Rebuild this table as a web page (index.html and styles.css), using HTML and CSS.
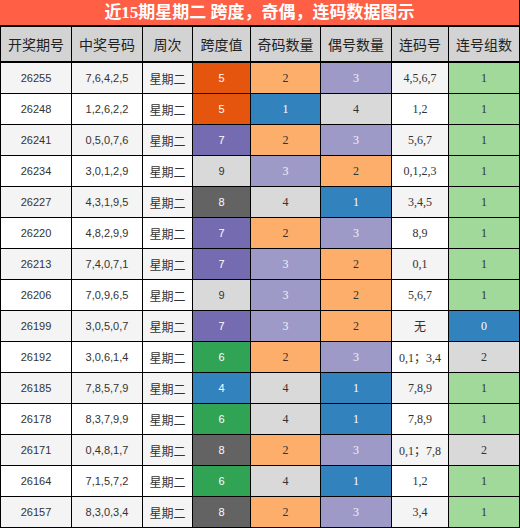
FILE: index.html
```html
<!DOCTYPE html>
<html lang="zh-CN">
<head>
  <meta charset="UTF-8" />
  <title>近15期星期二 跨度，奇偶，连码数据图示</title>
  <link rel="stylesheet" href="styles.css">
</head>
<body>
  <div class="page">
    <div class="title">近15期星期二 跨度，奇偶，连码数据图示</div>

    <div class="grid">
      <!-- 表头 -->
      <div class="head">开奖期号</div>
      <div class="head">中奖号码</div>
      <div class="head">周次</div>
      <div class="head">跨度值</div>
      <div class="head">奇码数量</div>
      <div class="head">偶号数量</div>
      <div class="head">连码号</div>
      <div class="head">连号组数</div>

      <div class="row odd">
        <div class="plain sans">26255</div><div class="plain sans">7,6,4,2,5</div><div class="plain cn">星期二</div>
        <div class="sans k-orange">5</div><div class="serif k-peach">2</div><div class="serif k-lilac">3</div>
        <div class="plain serif">4,5,6,7</div><div class="serif k-mint">1</div>
      </div>
      <div class="row">
        <div class="plain sans">26248</div><div class="plain sans">1,2,6,2,2</div><div class="plain cn">星期二</div>
        <div class="sans k-orange">5</div><div class="serif k-blue">1</div><div class="serif k-grey">4</div>
        <div class="plain serif">1,2</div><div class="serif k-mint">1</div>
      </div>
      <div class="row odd">
        <div class="plain sans">26241</div><div class="plain sans">0,5,0,7,6</div><div class="plain cn">星期二</div>
        <div class="sans k-purple">7</div><div class="serif k-peach">2</div><div class="serif k-lilac">3</div>
        <div class="plain serif">5,6,7</div><div class="serif k-mint">1</div>
      </div>
      <div class="row">
        <div class="plain sans">26234</div><div class="plain sans">3,0,1,2,9</div><div class="plain cn">星期二</div>
        <div class="sans k-grey">9</div><div class="serif k-lilac">3</div><div class="serif k-peach">2</div>
        <div class="plain serif">0,1,2,3</div><div class="serif k-mint">1</div>
      </div>
      <div class="row odd">
        <div class="plain sans">26227</div><div class="plain sans">4,3,1,9,5</div><div class="plain cn">星期二</div>
        <div class="sans k-dark">8</div><div class="serif k-grey">4</div><div class="serif k-blue">1</div>
        <div class="plain serif">3,4,5</div><div class="serif k-mint">1</div>
      </div>
      <div class="row">
        <div class="plain sans">26220</div><div class="plain sans">4,8,2,9,9</div><div class="plain cn">星期二</div>
        <div class="sans k-purple">7</div><div class="serif k-peach">2</div><div class="serif k-lilac">3</div>
        <div class="plain serif">8,9</div><div class="serif k-mint">1</div>
      </div>
      <div class="row odd">
        <div class="plain sans">26213</div><div class="plain sans">7,4,0,7,1</div><div class="plain cn">星期二</div>
        <div class="sans k-purple">7</div><div class="serif k-lilac">3</div><div class="serif k-peach">2</div>
        <div class="plain serif">0,1</div><div class="serif k-mint">1</div>
      </div>
      <div class="row">
        <div class="plain sans">26206</div><div class="plain sans">7,0,9,6,5</div><div class="plain cn">星期二</div>
        <div class="sans k-grey">9</div><div class="serif k-lilac">3</div><div class="serif k-peach">2</div>
        <div class="plain serif">5,6,7</div><div class="serif k-mint">1</div>
      </div>
      <div class="row odd">
        <div class="plain sans">26199</div><div class="plain sans">3,0,5,0,7</div><div class="plain cn">星期二</div>
        <div class="sans k-purple">7</div><div class="serif k-lilac">3</div><div class="serif k-peach">2</div>
        <div class="plain serif">无</div><div class="serif k-blue">0</div>
      </div>
      <div class="row">
        <div class="plain sans">26192</div><div class="plain sans">3,0,6,1,4</div><div class="plain cn">星期二</div>
        <div class="sans k-green">6</div><div class="serif k-peach">2</div><div class="serif k-lilac">3</div>
        <div class="plain serif">0,1；3,4</div><div class="serif k-grey">2</div>
      </div>
      <div class="row odd">
        <div class="plain sans">26185</div><div class="plain sans">7,8,5,7,9</div><div class="plain cn">星期二</div>
        <div class="sans k-blue">4</div><div class="serif k-grey">4</div><div class="serif k-blue">1</div>
        <div class="plain serif">7,8,9</div><div class="serif k-mint">1</div>
      </div>
      <div class="row">
        <div class="plain sans">26178</div><div class="plain sans">8,3,7,9,9</div><div class="plain cn">星期二</div>
        <div class="sans k-green">6</div><div class="serif k-grey">4</div><div class="serif k-blue">1</div>
        <div class="plain serif">7,8,9</div><div class="serif k-mint">1</div>
      </div>
      <div class="row odd">
        <div class="plain sans">26171</div><div class="plain sans">0,4,8,1,7</div><div class="plain cn">星期二</div>
        <div class="sans k-dark">8</div><div class="serif k-peach">2</div><div class="serif k-lilac">3</div>
        <div class="plain serif">0,1；7,8</div><div class="serif k-grey">2</div>
      </div>
      <div class="row">
        <div class="plain sans">26164</div><div class="plain sans">7,1,5,7,2</div><div class="plain cn">星期二</div>
        <div class="sans k-green">6</div><div class="serif k-grey">4</div><div class="serif k-blue">1</div>
        <div class="plain serif">1,2</div><div class="serif k-mint">1</div>
      </div>
      <div class="row odd">
        <div class="plain sans">26157</div><div class="plain sans">8,3,0,3,4</div><div class="plain cn">星期二</div>
        <div class="sans k-dark">8</div><div class="serif k-peach">2</div><div class="serif k-lilac">3</div>
        <div class="plain serif">3,4</div><div class="serif k-mint">1</div>
      </div>
    </div>
  </div>
</body>
</html>
```

FILE: styles.css
```css
/* Página */
body {
  margin: 0;
  background: #fff;
}
.page {
  width: 520px;
  background: #000;
}

/* Título */
.title {
  height: 25px;
  line-height: 25px;
  margin-right: 1px;
  background: #ff5f45;
  color: #fff;
  font-family: "Liberation Serif", "Noto Sans CJK SC", serif;
  font-weight: bold;
  font-size: 17px;
  text-align: center;
  white-space: nowrap;
}

/* Tabela */
.grid {
  display: grid;
  grid-template-columns: 70px 70px 49px 57px 69px 70px 56px 70px;
  grid-auto-rows: 30px;
  gap: 1px;
  border-top: 2px solid #000;
  padding: 0 1px 1px 1px;
}
.row {
  display: contents;
}
.grid > div > div,
.head {
  display: flex;
  align-items: center;
  justify-content: center;
  white-space: nowrap;
  color: #333;
}
.head {
  height: 35px;
  box-sizing: border-box;
  border-bottom: 1px solid #000;
  background: #d3d3d3;
  font-family: "Noto Sans CJK SC", sans-serif;
  font-size: 14px;
  color: #222;
}
.grid > .head {
  align-self: start;
}
.grid {
  grid-template-rows: 35px;
}

.plain { background: #fff; }
.row.odd .plain { background: #f4f4f4; }

.sans {
  font-family: "Liberation Sans", "Noto Sans CJK SC", sans-serif;
  font-size: 11px;
}
.serif {
  font-family: "Liberation Serif", "Noto Sans CJK SC", serif;
  font-size: 12px;
}
.cn {
  font-family: "Noto Sans CJK SC", sans-serif;
  font-size: 12px;
  color: #222;
}

/* Cores (escala category20c) */
.grid .k-orange { background: #e6550d; color: #fff; }
.grid .k-blue   { background: #3182bd; color: #fff; }
.grid .k-purple { background: #756bb1; color: #fff; }
.grid .k-dark   { background: #636363; color: #fff; }
.grid .k-green  { background: #31a354; color: #fff; }
.grid .k-lilac  { background: #9e9ac8; color: #f2f2f2; }
.grid .k-grey   { background: #d9d9d9; color: #333; }
.grid .k-peach  { background: #fdae6b; color: #333; }
.grid .k-mint   { background: #a1d99b; color: #333; }
```
